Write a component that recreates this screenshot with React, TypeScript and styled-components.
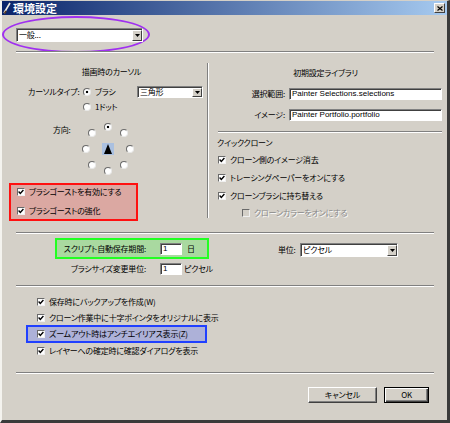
import React from 'react';
import styled, { createGlobalStyle } from 'styled-components';

const FACE = '#d4d0c8';
const JP = `"Noto Sans CJK JP", "Liberation Sans", sans-serif`;

const GlobalStyle = createGlobalStyle`
  html, body { margin: 0; padding: 0; background: #404040; }
  #root { width: 450px; height: 423px; }
`;

const Window = styled.div`
  width: 450px;
  height: 423px;
  box-sizing: border-box;
  background: ${FACE};
  border-top: 1px solid ${FACE};
  border-left: 2px solid #f4f3ef;
  border-right: 3px solid #3a3a3a;
  border-bottom: 3px solid #3a3a3a;
  font-family: ${JP};
  font-feature-settings: 'palt';
  font-size: 8px;
  letter-spacing: -0.2px;
  line-height: 10px;
  color: #000;
  overflow: hidden;
`;

const TitleBar = styled.div`
  height: 14px;
  display: flex;
  align-items: center;
  padding: 0 2px 0 1px;
  background: linear-gradient(to right, #0a246a, #a6caf0);
`;

const TitleText = styled.span`
  margin-left: 2px;
  color: #fff;
  font-weight: bold;
  font-size: 11px;
  line-height: 14px;
  letter-spacing: 0;
  font-feature-settings: normal;
`;

const CloseBtn = styled.span`
  margin-left: auto;
  width: 11px;
  height: 10px;
  box-sizing: border-box;
  background: ${FACE};
  border: 1px solid;
  border-color: #fff #404040 #404040 #fff;
  display: flex;
  align-items: center;
  justify-content: center;
`;

const Body = styled.div`
  padding: 0 13px 0 14px;
`;

const Ellipse = styled.div`
  margin: 1px 0 -2px -14px;
  width: 148px;
  height: 37px;
  box-sizing: border-box;
  border: 2px solid #a030f0;
  border-radius: 50%;
  display: flex;
  align-items: center;
  padding-left: 12px;
`;

const HSep = styled.div<{ $ml?: number; $mt?: number }>`
  height: 0;
  border-top: 1px solid #808080;
  border-bottom: 1px solid #fff;
  margin-left: ${(p) => p.$ml ?? 0}px;
  margin-top: ${(p) => p.$mt ?? 0}px;
`;

const VSep = styled.div`
  width: 0;
  height: 155px;
  margin-top: 10px;
  border-left: 1px solid #808080;
  border-right: 1px solid #fff;
`;

const Select = styled.div<{ $w: number; $h: number }>`
  width: ${(p) => p.$w}px;
  height: ${(p) => p.$h}px;
  box-sizing: border-box;
  display: flex;
  align-items: stretch;
  background: #fff;
  border: 1px solid;
  border-color: #808080 #fff #fff #808080;
  box-shadow: inset 1px 1px #404040;
  flex: none;
`;

const SelectText = styled.span`
  flex: 1;
  padding-left: 2px;
  display: flex;
  align-items: center;
  white-space: nowrap;
  overflow: hidden;
`;

const DropBtn = styled.span`
  width: 10px;
  margin: 1px 0 0 0;
  box-sizing: border-box;
  background: ${FACE};
  border: 1px solid;
  border-color: #fff #404040 #404040 #fff;
  display: flex;
  align-items: center;
  justify-content: center;
`;

const TextBox = styled.div<{ $w: number; $h: number }>`
  width: ${(p) => p.$w}px;
  height: ${(p) => p.$h}px;
  box-sizing: border-box;
  background: #fff;
  border: 1px solid;
  border-color: #808080 #fff #fff #808080;
  box-shadow: inset 1px 1px #404040;
  padding-left: 2px;
  display: flex;
  align-items: center;
  font-family: 'Liberation Sans', sans-serif;
  font-size: 8px;
  letter-spacing: 0;
  white-space: nowrap;
  overflow: hidden;
  flex: none;
`;

const Columns = styled.div`
  display: flex;
  height: 179px;
`;

const LeftCol = styled.div`
  width: 191px;
  flex: none;
  display: flex;
  flex-direction: column;
`;

const RightCol = styled.div`
  flex: 1;
  display: flex;
  flex-direction: column;
`;

const Heading = styled.div<{ $mt: number }>`
  margin-top: ${(p) => p.$mt}px;
  height: 10px;
  text-align: center;
`;

const SubHeading = styled.div`
  margin: 5px 0 0 8px;
  height: 10px;
`;

const Row = styled.div<{ $mt: number; $ml?: number; $h?: number }>`
  display: flex;
  align-items: center;
  margin-top: ${(p) => p.$mt}px;
  margin-left: ${(p) => p.$ml ?? 0}px;
  height: ${(p) => p.$h ?? 12}px;
  white-space: nowrap;
`;

const CursorGrid = styled.div`
  display: grid;
  grid-template-columns: 55px 54px 66px;
  grid-template-rows: 12px 12px;
  row-gap: 3px;
  align-items: center;
  margin: 9px 0 0 12px;
  white-space: nowrap;
`;

const Label = styled.span<{ $w?: number; $right?: boolean }>`
  display: inline-block;
  width: ${(p) => (p.$w ? `${p.$w}px` : 'auto')};
  text-align: ${(p) => (p.$right ? 'right' : 'left')};
  flex: none;
`;

const RadioDot = styled.span<{ $on?: boolean }>`
  width: 8px;
  height: 8px;
  box-sizing: border-box;
  border-radius: 50%;
  border: 1px solid;
  border-color: #6a6a6a #e8e8e8 #e8e8e8 #6a6a6a;
  background: ${(p) => (p.$on ? 'radial-gradient(circle, #000 0 1.3px, #fff 1.6px)' : '#fff')};
  flex: none;
`;

const RadioOption = styled.span<{ $col?: number }>`
  display: flex;
  align-items: center;
  gap: 4px;
  grid-column: ${(p) => p.$col ?? 'auto'};
`;

const Dial = styled.div`
  position: relative;
  width: 54px;
  height: 56px;
  margin-left: 6px;
`;

const DialSpot = styled.span`
  position: absolute;
  display: flex;
`;

const Pointer = styled.span`
  position: absolute;
  left: 21px;
  top: 22px;
  width: 12px;
  height: 12px;
  background: #aac0e0;
  display: flex;
  align-items: center;
  justify-content: center;
`;

const DirLabel = styled.span`
  margin: 4px 0 0 37px;
  width: 22px;
  height: 10px;
`;

const Mark = styled.div<{ $tone: 'red' | 'green' | 'blue' }>`
  box-sizing: border-box;
  border: 2px solid
    ${(p) => (p.$tone === 'red' ? '#ff1010' : p.$tone === 'green' ? '#22ff22' : '#2040ff')};
  background: ${(p) =>
    p.$tone === 'red' ? '#dba8a2' : p.$tone === 'green' ? '#a9d9a0' : '#adb1d8'};
  display: flex;
`;

const RedBox = styled(Mark)`
  margin: 6px 0 0 -7px;
  width: 129px;
  height: 38px;
  flex-direction: column;
  padding: 1px 0 0 6px;
  gap: 7px;
`;

const GreenBox = styled(Mark)`
  margin: 4px 0 0 39px;
  width: 154px;
  height: 21px;
  align-items: center;
`;

const BlueBox = styled(Mark)`
  margin: 1px 0 0 10px;
  width: 181px;
  height: 18px;
  align-items: center;
  padding-left: 9px;
`;

const CheckBox = styled.span<{ $disabled?: boolean }>`
  width: 8px;
  height: 8px;
  box-sizing: border-box;
  border: 1px solid;
  border-color: #6a6a6a #f0f0f0 #f0f0f0 #6a6a6a;
  background: ${(p) => (p.$disabled ? FACE : '#fff')};
  display: flex;
  align-items: center;
  justify-content: center;
  flex: none;
`;

const CheckLine = styled.span<{ $disabled?: boolean }>`
  display: flex;
  align-items: center;
  gap: 4px;
  height: 12px;
  white-space: nowrap;
  color: ${(p) => (p.$disabled ? '#8a8a8a' : '#000')};
  text-shadow: ${(p) => (p.$disabled ? '1px 1px 0 #fff' : 'none')};
`;

const UnitsSection = styled.div`
  display: flex;
  padding-bottom: 10px;
`;

const UnitsLeft = styled.div`
  width: 193px;
  flex: none;
  display: flex;
  flex-direction: column;
`;

const FieldRow = styled.div<{ $ml?: number; $mt?: number }>`
  display: flex;
  align-items: center;
  height: 13px;
  margin-left: ${(p) => p.$ml ?? 0}px;
  margin-top: ${(p) => p.$mt ?? 0}px;
  white-space: nowrap;
`;

const FieldLabel = styled.span`
  width: 89px;
  text-align: right;
  margin-right: 14px;
  flex: none;
`;

const Unit = styled.span<{ $ml: number }>`
  margin-left: ${(p) => p.$ml}px;
`;

const UnitsRight = styled.div`
  display: flex;
  align-items: center;
  margin: 9px 0 0 69px;
  height: 14px;
  white-space: nowrap;
`;

const UnitLabel = styled.span`
  width: 22px;
  flex: none;
`;

const OptionList = styled.div`
  display: flex;
  flex-direction: column;
`;

const ButtonBar = styled.div`
  display: flex;
  justify-content: flex-end;
  gap: 7px;
  margin-top: 13px;
  padding-right: 5px;
`;

const Button = styled.span<{ $w: number; $default?: boolean }>`
  width: ${(p) => p.$w}px;
  height: 16px;
  box-sizing: border-box;
  background: ${FACE};
  border: 1px solid;
  border-color: ${(p) => (p.$default ? '#000' : '#fff #404040 #404040 #fff')};
  box-shadow: ${(p) =>
    p.$default
      ? 'inset 1px 1px #fff, inset -1px -1px #404040, inset -2px -2px #808080'
      : 'inset -1px -1px #808080'};
  display: flex;
  align-items: center;
  justify-content: center;
`;

const Tri = () => (
  <svg width="5" height="3" viewBox="0 0 5 3">
    <polygon points="0,0 5,0 2.5,3" fill="#000" />
  </svg>
);

const Check = () => (
  <svg width="6" height="6" viewBox="0 0 6 6">
    <polyline points="0.6,2.6 2.3,4.4 5.4,1.1" fill="none" stroke="#000" strokeWidth="1.4" />
  </svg>
);

const DropDown = ({ w, h, text }: { w: number; h: number; text: string }) => (
  <Select $w={w} $h={h}>
    <SelectText>{text}</SelectText>
    <DropBtn>
      <Tri />
    </DropBtn>
  </Select>
);

const Option = ({ label, disabled, checked = true }: { label: string; disabled?: boolean; checked?: boolean }) => (
  <CheckLine $disabled={disabled}>
    <CheckBox $disabled={disabled}>{checked && <Check />}</CheckBox>
    {label}
  </CheckLine>
);

const DIRECTIONS = [0, 45, 90, 135, 180, 225, 270, 315];

const App = () => {
  return (
    <>
      <GlobalStyle />
      <Window>
        <TitleBar>
          <svg width="8" height="12" viewBox="0 0 8 12">
            <line x1="1" y1="11" x2="7" y2="1" stroke="#f0ece0" strokeWidth="1.6" />
            <line x1="1.5" y1="11.5" x2="3" y2="9" stroke="#5a3a20" strokeWidth="1.6" />
          </svg>
          <TitleText>環境設定</TitleText>
          <CloseBtn>
            <svg width="6" height="5" viewBox="0 0 6 5">
              <path d="M0.5 0.5 L5.5 4.5 M5.5 0.5 L0.5 4.5" stroke="#000" strokeWidth="1.2" />
            </svg>
          </CloseBtn>
        </TitleBar>

        <Body>
          <Ellipse>
            <DropDown w={127} h={14} text="一般..." />
          </Ellipse>
          <HSep />

          <Columns>
            <LeftCol>
              <Heading $mt={14}>描画時のカーソル</Heading>
              <CursorGrid>
                <span>カーソルタイプ:</span>
                <RadioOption>
                  <RadioDot $on />
                  ブラシ
                </RadioOption>
                <DropDown w={66} h={12} text="三角形" />
                <RadioOption $col={2}>
                  <RadioDot />
                  1ドット
                </RadioOption>
              </CursorGrid>
              <Row $mt={8} $h={56} style={{ alignItems: 'flex-start' }}>
                <DirLabel>方向:</DirLabel>
                <Dial>
                  {DIRECTIONS.map((a) => {
                    const r = (a * Math.PI) / 180;
                    const x = 27 + 22 * Math.sin(r);
                    const y = 28 - 22 * Math.cos(r);
                    return (
                      <DialSpot key={a} style={{ left: x - 4, top: y - 4 }}>
                        <RadioDot $on={a === 0} />
                      </DialSpot>
                    );
                  })}
                  <Pointer>
                    <svg width="8" height="10" viewBox="0 0 8 10">
                      <polygon points="4,0 8,10 0,10" fill="#000" />
                    </svg>
                  </Pointer>
                </Dial>
              </Row>
              <RedBox $tone="red">
                <Option label="ブラシゴーストを有効にする" />
                <Option label="ブラシゴーストの強化" />
              </RedBox>
            </LeftCol>

            <VSep />

            <RightCol>
              <Heading $mt={15}>初期設定ライブラリ</Heading>
              <Row $mt={10}>
                <Label $w={76} $right>
                  選択範囲:
                </Label>
                <span style={{ width: 4 }} />
                <TextBox $w={153} $h={12}>
                  Painter Selections.selections
                </TextBox>
              </Row>
              <Row $mt={9}>
                <Label $w={76} $right>
                  イメージ:
                </Label>
                <span style={{ width: 4 }} />
                <TextBox $w={153} $h={12}>
                  Painter Portfolio.portfolio
                </TextBox>
              </Row>
              <HSep $ml={9} $mt={10} />
              <SubHeading>クイッククローン</SubHeading>
              <Row $mt={6} $ml={9}>
                <Option label="クローン側のイメージ消去" />
              </Row>
              <Row $mt={6} $ml={9}>
                <Option label="トレーシングペーパーをオンにする" />
              </Row>
              <Row $mt={6} $ml={9}>
                <Option label="クローンブラシに持ち替える" />
              </Row>
              <Row $mt={5} $ml={33}>
                <Option label="クローンカラーをオンにする" disabled checked={false} />
              </Row>
            </RightCol>
          </Columns>

          <HSep />

          <UnitsSection>
            <UnitsLeft>
              <GreenBox $tone="green">
                <FieldRow>
                  <FieldLabel>スクリプト自動保存期間:</FieldLabel>
                  <TextBox $w={22} $h={12}>1</TextBox>
                  <Unit $ml={5}>日</Unit>
                </FieldRow>
              </GreenBox>
              <FieldRow $ml={41} $mt={3}>
                <FieldLabel>ブラシサイズ変更単位:</FieldLabel>
                <TextBox $w={22} $h={12}>1</TextBox>
                <Unit $ml={2}>ピクセル</Unit>
              </FieldRow>
            </UnitsLeft>
            <UnitsRight>
              <UnitLabel>単位:</UnitLabel>
              <DropDown w={98} h={14} text="ピクセル" />
            </UnitsRight>
          </UnitsSection>

          <HSep />

          <OptionList>
            <Row $mt={9} $ml={21}>
              <Option label="保存時にバックアップを作成(W)" />
            </Row>
            <Row $mt={4} $ml={21}>
              <Option label="クローン作業中に十字ポインタをオリジナルに表示" />
            </Row>
            <BlueBox $tone="blue">
              <Option label="ズームアウト時はアンチエイリアス表示(Z)" />
            </BlueBox>
            <Row $mt={2} $ml={21}>
              <Option label="レイヤーへの確定時に確認ダイアログを表示" />
            </Row>
          </OptionList>

          <HSep $mt={15} />

          <ButtonBar>
            <Button $w={69}>キャンセル</Button>
            <Button $w={45} $default>
              OK
            </Button>
          </ButtonBar>
        </Body>
      </Window>
    </>
  );
};

export default App;
